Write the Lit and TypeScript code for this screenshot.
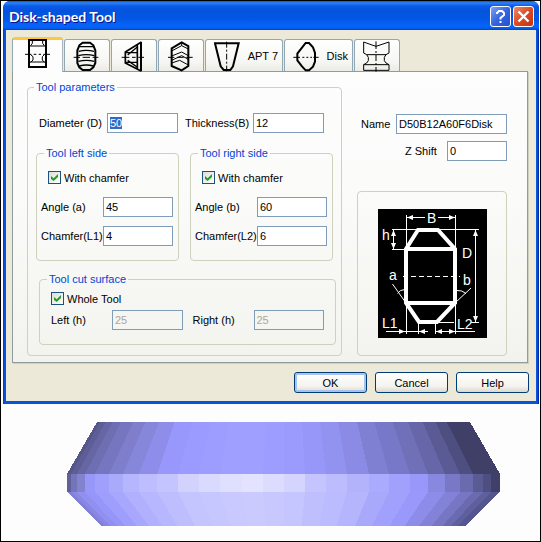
import { LitElement, html, css, svg } from "lit";
import { customElement, query } from "lit/decorators.js";

const tabs = [
  {
    id: "groove", label: "", title: "Grooving tool", box: "75 111 78 96", w: 26, h: 32,
    art: svg`<path d="M87 118V202M138 118V202" stroke-width="6"/><path d="M84 120H141M84 201H141" stroke-width="6"/>
      <path d="M90 138H136M90 186H136M97 121V130L92 137M128 121V130L133 137M92 164L99 170V180L92 187M133 164L127 170V180L133 187" stroke-width="3"/>
      <path d="M75 163H94M101 163H109M116 163H123M130 163H150" stroke-width="3"/>`,
  },
  {
    id: "barrel", label: "", title: "Barrel tool", box: "217 117 78 96", w: 26, h: 32,
    art: svg`<path d="M246 125H268L278 133L284 148V186L278 199L268 207H246L236 199L230 186V148L236 133Z" stroke-width="6"/>
      <path d="M236 137H278M234 151Q257 145 280 151M233 164Q257 158 281 164M233 181Q257 175 281 181M236 195Q257 189 278 195" stroke-width="4"/>
      <path d="M219 169H238M246 169H268M276 169H293" stroke-width="3"/>`,
  },
  {
    id: "cone", label: "", title: "Conical tool", box: "361 117 78 96", w: 26, h: 32,
    art: svg`<path d="M424 122V211" stroke-width="6"/><path d="M424 124L377 153V186L424 210M413 131V204" stroke-width="5"/>
      <path d="M377 155H412M377 184H412M384 162L412 139M384 178L412 198" stroke-width="4"/>
      <path d="M366 169H389M397 169H408M416 169H433" stroke-width="3"/>`,
  },
  {
    id: "chevron", label: "", title: "Profile tool", box: "502 117 78 96", w: 26, h: 32,
    art: svg`<path d="M516 142L546 124L566 135V195L546 208L516 195Z" stroke-width="6"/>
      <path d="M516 150L546 134L566 144M516 165L546 153L566 164M516 178L546 164L566 175M516 186L540 178L566 192M546 124V134" stroke-width="3"/>
      <path d="M505 169H524M532 169H552M560 169H579" stroke-width="3"/>`,
  },
  {
    id: "apt7", label: "APT 7", title: "APT 7 tool", box: "44 27 78 96", w: 26, h: 32,
    art: svg`<path d="M47 37H118L101 106L93 117H73L64 106Z" stroke-width="6"/>
      <path d="M82 32V50M82 56V62M82 68V86M82 92V98M82 104V121" stroke-width="3"/>`,
  },
  {
    id: "disk", label: "Disk", title: "Disk tool", box: "275 27 78 96", w: 26, h: 32,
    art: svg`<path d="M313 36H323L335 49L341 66V92L335 107L323 118H313L302 106L288 88V68L302 50Z" stroke-width="6"/>
      <path d="M276 79H296M303 79H309M315 79H321M327 79H332M336 79H352" stroke-width="3"/>`,
  },
  {
    id: "shaped", label: "", title: "Shaped tool", box: "479 27 81 96", w: 27, h: 32,
    art: svg`<path d="M481 33V66L490 71L495 79V89L490 96L481 101V118H557V101L548 96L543 89V79L548 71L557 66V33L530 42L518 46L506 42Z" stroke-width="3"/>
      <path d="M490 71H548M481 101H557M518 31V54M518 60V66M518 72V90M518 96V102M518 108V122" stroke-width="3"/>`,
  },
];

// Facet edges along the rim of the disk, left to right, with the shade of each band.
const edges = [0, 4, 10, 18, 28, 42, 56, 72, 90, 111, 132, 153, 175, 196, 217, 238, 259, 280, 302, 322, 343, 361, 378, 393, 406, 416, 424, 433];
const upper = ["#56568a", "#5e5e96", "#6666a4", "#6e6eb2", "#7676c0", "#7e7ecc", "#8686da", "#8e8eea", "#9898fc", "#9b9bff", "#9d9dff", "#9f9fff", "#9f9fff", "#9d9dff", "#9b9bfe", "#9797f9", "#9292f1", "#8b8be6", "#8080d3", "#7878c8", "#7070b9", "#6666a8", "#5a5a95", "#4e4e80", "#3f3f67", "#3f3f67", "#3f3f67"];
const rim = ["#60609a", "#7474b8", "#8282cf", "#9797fa", "#a0a0fc", "#aaaafb", "#b6b6ff", "#bdbdff", "#c4c4ff", "#d2d2fd", "#dadafe", "#dfdffe", "#e3e3ff", "#dcdcfe", "#d4d4fd", "#c4c4ff", "#bcbcfe", "#b3b3fb", "#aaaafe", "#a0a0fd", "#9898fa", "#8888de", "#7878c6", "#6a6aaf", "#5a5a94", "#4e4e80", "#3f3f67"];
const lower = ["#8080d8", "#8888e4", "#9090f0", "#9696fa", "#9e9efd", "#a7a7fe", "#b0b0ff", "#b7b7ff", "#bebeff", "#c4c4ff", "#c7c7ff", "#c9c9ff", "#cacaff", "#c8c8ff", "#c5c5ff", "#bfbffe", "#bbbbff", "#b5b5fe", "#a9a9fc", "#a1a1fd", "#9999fb", "#8d8de9", "#8282d8", "#7676c3", "#6a6ab0", "#5f5f9e", "#555590"];
const topX = (x: number) => 30 + (x * 373) / 433;
const bottomX = (x: number) => 35 + (x * 363) / 433;

@customElement("app-root")
export class AppRoot extends LitElement {
  @query("#diameter") private diameter!: HTMLInputElement;

  static styles = css`
    :host { display: block; font: 11px/14px "Liberation Sans", Arial, sans-serif; color: #000; }
    * { box-sizing: border-box; }
    button, input { font: inherit; color: inherit; margin: 0; }
    svg { display: block; flex: none; }
    .page { border: 1px solid #000; background: #fdfdfd; padding: 0 1px 0 2px; }
    .window { background: linear-gradient(90deg, #0831d9, #0855dd 2px, #0855dd calc(100% - 2px), #001ea0); border-radius: 7px 7px 0 0; padding: 0 3px 3px; }
    .titlebar {
      display: flex; align-items: center; gap: 2px; height: 29px; margin: 0 -3px; padding: 2px 5px 0 6px;
      border-radius: 7px 7px 0 0;
      background: linear-gradient(#0a58d8 0, #2e82f5 2px, #0a5ae8 5px, #0453dd 10px, #0458e6 19px, #0664fb 24px, #0560f2 27px, #0140c4 29px);
    }
    .title { flex: 1; margin: 0; font: bold 14px/18px Lato, "Open Sans", sans-serif; color: #fff; text-shadow: 1px 1px #0f1089; }
    .caption { width: 21px; height: 21px; padding: 0; border: 1px solid #fff; border-radius: 3px; }
    .caption.help { background: linear-gradient(135deg, #7da2f5, #3665e0 50%, #2450d0); }
    .caption.close { background: linear-gradient(135deg, #ec8a6c, #dc4a22 50%, #c03510); }
    .client { background: #ece9d8; padding: 7px 8px 8px 6px; }
    .tabs { display: flex; align-items: flex-end; gap: 1px; height: 34px; }
    .tab {
      display: flex; align-items: center; justify-content: space-between; gap: 7px; width: 46px; height: 32px; padding: 0 4px 0 8px;
      border: 1px solid #91a7b4; border-bottom: 0; border-radius: 3px 3px 0 0;
      background: linear-gradient(#fff, #f6f6f2 70%, #ecebe6); white-space: nowrap;
    }
    .tab.wide { width: 78px; }
    .tab.medium { width: 69px; }
    .tab.active { width: 51px; height: 35px; margin-bottom: -1px; padding-left: 12px; padding-bottom: 6px; border-top: 3px solid #ffc73c; border-right-color: #aab6bc; background: #fdfdfd; z-index: 1; }
    .icon { fill: none; stroke: #000; }
    .panel {
      display: grid; grid-template-columns: minmax(0, 315fr) minmax(0, 150fr); column-gap: 15px;
      padding: 8px 20px 6px 14px; border: 1px solid #919b9c; background: linear-gradient(#fdfdfd, #fbfbfa 40%, #f3f3ee);
      box-shadow: 1px 1px #d0cebf;
    }
    .group { min-width: 0; margin: 0; padding: 0; border: 1px solid #d0d0bf; border-radius: 4px; }
    .group > legend { margin-left: 6px; padding: 0 2px; color: #0046d5; white-space: nowrap; }
    .pair { display: grid; grid-template-columns: minmax(0, 1fr) minmax(0, 1fr); }
    .sizes { column-gap: 7px; padding: 19px 17px 13px 11px; }
    .sides { column-gap: 11px; padding: 0 8px 11px; }
    .side { padding: 11px 5px 14px 4px; }
    .side > legend { margin-left: 3px; }
    .cut { margin: 0 5px 10px 11px; padding: 6px 11px 14px; }
    .cut > legend { margin-left: -4px; }
    .cut .pair { column-gap: 10px; margin-top: 5px; }
    .field { display: flex; align-items: center; gap: 3px; min-width: 0; }
    .field > label { flex: none; width: 58px; white-space: nowrap; }
    .sizes .field > label { width: 65px; }
    .side .field { margin-top: 9px; gap: 0; }
    .side .field > label { width: 62px; }
    .side .check + .field { margin-top: 13px; }
    .check { display: flex; align-items: center; gap: 3px; height: 13px; white-space: nowrap; }
    .side .check { padding-left: 7px; }
    .text { flex: 1; min-width: 0; width: 0; height: 20px; padding: 0 2px; border: 1px solid #7f9db9; border-radius: 0; background: #fff; outline: none; }
    .text::selection { background: #316ac5; color: #fff; }
    .text:disabled { background: #f5f5f1; color: #aca899; }
    .box { appearance: none; flex: none; display: grid; place-items: center; width: 13px; height: 13px; border: 1px solid #1c5180; background: linear-gradient(135deg, #dcdcd7, #fff); }
    .box:checked::after { content: ""; width: 7px; height: 7px; background: #21a121; clip-path: polygon(0 28%, 38% 62%, 100% 0, 100% 42%, 38% 100%, 0 70%); }
    .aside { display: flex; flex-direction: column; padding-top: 34px; }
    .field.name { padding-left: 4px; }
    .field.name > label { width: 32px; }
    .field.shift { margin: 7px 0 30px; padding-left: 48px; }
    .field.shift > label { width: 39px; }
    .preview { flex: 1; display: flex; justify-content: center; align-items: center; }
    .diagram { background: #000; fill: none; stroke: #fff; }
    .diagram text { fill: #fff; stroke: none; font: 14px "Liberation Sans", sans-serif; }
    .diagram .tip { fill: #fff; stroke: none; }
    .actions { display: flex; justify-content: flex-end; gap: 8px; margin: 9px -1px 0 0; }
    .action { width: 73px; height: 21px; padding: 0; border: 1px solid #003c74; border-radius: 3px; background: linear-gradient(#fff, #f4f3ee 70%, #dcd8ce); }
    .action.primary { box-shadow: inset 0 0 0 2px #a9c2f0; }
    .scene { padding: 18px 39px 15px 64px; }
    .scene svg { width: 100%; height: auto; }
  `;

  firstUpdated() {
    this.diameter.focus();
    this.diameter.select();
  }

  private field(id: string, label: string, value: string, disabled = false, extra = "") {
    return html`<div class="field ${extra}">
      <label for=${id}>${label}</label>
      <input class="text" id=${id} type="text" .value=${value} ?disabled=${disabled} />
    </div>`;
  }

  private check(label: string) {
    return html`<label class="check"><input class="box" type="checkbox" checked />${label}</label>`;
  }

  private diagram() {
    return html`<svg class="diagram" width="109" height="129" viewBox="0 0 109 129" role="img" aria-label="Tool dimensions">
      <path d="M28.5 6V125M77.5 6V125M29 8.5H47M60 8.5H77M14 20.5H101M15.5 21V40M14 40.5H27M97.5 21V113M93 113.5H101M60 113.5H76M8 122.5H50M57 122.5H97M40.5 114V125M57.5 114V125" />
      <path d="M25 67.5H82" stroke-dasharray="5 3" />
      <path d="M14.5 75L28 94M93 79L77 94M19.5 84.5Q22 80.5 27 80.5M79 81.5Q84 81 88 84.5" />
      <path stroke-width="4" d="M40 21H60L77 40V94L59 113H41L28 94V40ZM28 40H77M28 94H77" />
      <path class="tip" d="M29 8.5L35 6V11ZM77 8.5L71 6V11ZM15.5 21L13 27H18ZM15.5 40L13 34H18ZM97.5 21L95 27H100ZM97.5 113L95 107H100ZM27 122.5L21 120V125ZM41 122.5L47 120V125ZM58 122.5L64 120V125ZM77 122.5L71 120V125Z" />
      <text x="49" y="14">B</text><text x="4" y="31">h</text><text x="84" y="49">D</text>
      <text x="11" y="71">a</text><text x="85" y="76">b</text><text x="4" y="119">L1</text><text x="79" y="120">L2</text>
    </svg>`;
  }

  private disk() {
    return html`<svg viewBox="0 0 433 104" role="img" aria-label="Disk tool model" shape-rendering="crispEdges">
      ${edges.slice(0, -1).map((a, i) => {
        const b = edges[i + 1];
        return svg`<path fill=${upper[i]} d="M${topX(a)} 0H${topX(b)}L${b} 52H${a}Z"/>
          <path fill=${rim[i]} d="M${a} 52H${b}V70H${a}Z"/>
          <path fill=${lower[i]} d="M${a} 70H${b}L${bottomX(b)} 104H${bottomX(a)}Z"/>`;
      })}
    </svg>`;
  }

  render() {
    return html`<main class="page">
      <section class="window" aria-label="Disk-shaped Tool">
        <header class="titlebar">
          <h1 class="title">Disk-shaped Tool</h1>
          <button class="caption help" aria-label="Context help">
            <svg width="19" height="19" viewBox="0 0 19 19" fill="none" stroke="#fff" stroke-width="2"><path d="M6 7V6L8 4H11L13 6V8L9.5 11V12.5M9.5 14V16" /></svg>
          </button>
          <button class="caption close" aria-label="Close">
            <svg width="19" height="19" viewBox="0 0 19 19" stroke="#fff" stroke-width="2.4"><path d="M4.5 4.5L14.5 14.5M14.5 4.5L4.5 14.5" /></svg>
          </button>
        </header>
        <div class="client">
          <div class="tabs" role="tablist">
            ${tabs.map((t, i) => html`<button role="tab" aria-label=${t.title} aria-selected=${i === 0}
              class="tab ${i === 0 ? "active" : ""} ${t.id === "apt7" ? "wide" : t.id === "disk" ? "medium" : ""}">
              <svg class="icon" width=${t.w} height=${t.h} viewBox=${t.box}>${t.art}</svg>${t.label}</button>`)}
          </div>
          <div class="panel" role="tabpanel">
            <fieldset class="group">
              <legend>Tool parameters</legend>
              <div class="pair sizes">
                ${this.field("diameter", "Diameter (D)", "50")}
                ${this.field("thickness", "Thickness(B)", "12")}
              </div>
              <div class="pair sides">
                <fieldset class="group side">
                  <legend>Tool left side</legend>
                  ${this.check("With chamfer")}
                  ${this.field("angle-a", "Angle (a)", "45")}
                  ${this.field("chamfer-1", "Chamfer(L1)", "4")}
                </fieldset>
                <fieldset class="group side">
                  <legend>Tool right side</legend>
                  ${this.check("With chamfer")}
                  ${this.field("angle-b", "Angle (b)", "60")}
                  ${this.field("chamfer-2", "Chamfer(L2)", "6")}
                </fieldset>
              </div>
              <fieldset class="group cut">
                <legend>Tool cut surface</legend>
                ${this.check("Whole Tool")}
                <div class="pair">
                  ${this.field("left-h", "Left (h)", "25", true)}
                  ${this.field("right-h", "Right (h)", "25", true)}
                </div>
              </fieldset>
            </fieldset>
            <div class="aside">
              ${this.field("name", "Name", "D50B12A60F6Disk", false, "name")}
              ${this.field("z-shift", "Z Shift", "0", false, "shift")}
              <div class="group preview">${this.diagram()}</div>
            </div>
          </div>
          <footer class="actions">
            <button class="action primary">OK</button>
            <button class="action">Cancel</button>
            <button class="action">Help</button>
          </footer>
        </div>
      </section>
      <div class="scene">${this.disk()}</div>
    </main>`;
  }
}
